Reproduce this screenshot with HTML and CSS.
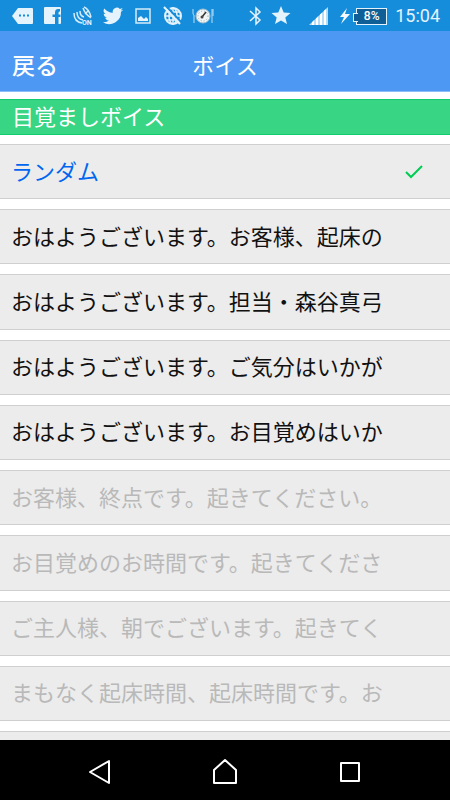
FILE: index.html
```html
<!DOCTYPE html>
<html lang="ja">
<head>
    <meta charset="UTF-8">
    <meta name="viewport" content="width=device-width, initial-scale=1.0">
    <title>ボイス</title>
    <link rel="stylesheet" href="styles.css">
</head>
<body>
    <!-- Status bar -->
    <div class="status-bar">
        <div class="status-left">
            <svg width="22" height="22" viewBox="0 0 22 22"><path d="M6 3h14q1 0 1 1v14q0 1-1 1H6L0 11z" fill="#e4f3fc"/><path d="M7 9.500h2v2H7zM11 9.500h2v2h-2zM15 9.500h2v2h-2z" fill="#168ddb"/></svg>
            <svg width="22" height="22" viewBox="0 0 22 22"><path d="M3 2h15q1 0 1 1v15q0 1-1 1h-1.500v-7h2v-2.500h-2V8q0-1.500 1-1.500H18V4h-2Q13 4 13 7.500v2h-2.500V12H13v7H3q-1 0-1-1V3q0-1 1-1z" fill="#e4f3fc"/></svg>
            <svg width="22" height="22" viewBox="0 0 22 22" fill="none" stroke="#d5ecfa" stroke-width="1.500"><path d="M2 8q0 9 8 10M5 7q0 7 6 8M8 6q0 5 4 6"/><path d="M11 3q2 6 8 10M12 2q5 2 7 10M13 9l3-3"/><text x="10" y="20" class="icon-text">ON</text></svg>
            <svg width="22" height="22" viewBox="0 0 24 24"><path d="M23 5.100a9 9 0 0 1-2.600.7 4.500 4.500 0 0 0 2-2.500 9 9 0 0 1-2.900 1.100 4.500 4.500 0 0 0-7.700 4.100A12.800 12.800 0 0 1 2.500 3.800a4.500 4.500 0 0 0 1.400 6 4.500 4.500 0 0 1-2-.6 4.500 4.500 0 0 0 3.600 4.500 4.500 4.500 0 0 1-2 .1 4.500 4.500 0 0 0 4.200 3.100A9 9 0 0 1 1 18.800 12.800 12.800 0 0 0 20.700 7.400 9 9 0 0 0 23 5.100z" fill="#e4f3fc"/></svg>
            <svg width="22" height="22" viewBox="0 0 22 22"><path d="M4 4h14v14H4z" fill="none" stroke="#d5ecfa" stroke-width="1.500"/><path d="M6 16v-3l3-2 3 3 2-2 2 2v2z" fill="#e4f3fc"/></svg>
            <svg width="22" height="22" viewBox="0 0 22 22" fill="none" stroke="#e4f3fc" stroke-width="2"><circle cx="11" cy="11" r="8"/><ellipse cx="11" cy="11" rx="4" ry="8" stroke-width="1.500"/><path d="M11 3v16M3 11h16M5 7h12M5 15h12" stroke-width="1.500"/><path d="M4 1l16 17" stroke="#168ddb"/><path d="M2 2l16 17"/></svg>
            <svg width="22" height="22" viewBox="0 0 22 22"><path d="M1 4v4q0 2 1 2v8M20 4v14M21 4v7" fill="none" stroke="#b9dff6"/><circle cx="11" cy="11" r="7" fill="#f2f5f6" stroke="#9fbccc"/><circle cx="11" cy="11" r="5" fill="none" stroke="#9aa5aa" stroke-dasharray="1 2"/><path d="M10 12l4-5" stroke="#333" stroke-width="1.500"/><circle cx="10" cy="12" r="1.500" fill="#444"/></svg>
        </div>
        <div class="status-right">
            <svg width="14" height="22" viewBox="0 0 14 22" fill="none" stroke="#e4f3fc" stroke-width="1.500"><path d="M1 6l10 9-4 4V3l4 4-10 9"/></svg>
            <svg width="20" height="22" viewBox="0 0 20 22"><path d="M10 1l2.700 6.500 6.800.5-5.200 4.500 1.700 6.500-6-3.600L4 19l1.700-6.500L.5 8l6.800-.5z" fill="#e4f3fc"/></svg>
            <svg width="32" height="22" viewBox="0 0 32 22"><path d="M10 20L29 2v18z" fill="#b8dcf5"/><path d="M13 17.200v2.800h2v-4.700zM17 13.400V20h2v-8.500zM21 9.600V20h2V7.700zM25 5.800V20h2V3.900z" fill="#fff"/></svg>
            <div class="charge">
                <svg width="11" height="22" viewBox="0 0 11 22"><path d="M8 3L1 12h4l-3 7 9-10H6z" fill="#f3faff"/></svg>
                <span class="battery">8%</span>
            </div>
            <span class="clock">15:04</span>
        </div>
    </div>

    <header class="header">
        <a href="#" class="back">戻る</a>
        <h1>ボイス</h1>
    </header>

    <main class="content">
        <h2>目覚ましボイス</h2>
        <div class="voice-list">
            <button type="button" class="voice selected">
                <span>ランダム</span>
                <svg class="check" width="20" height="16" viewBox="0 0 20 16"><path d="M2 8l5 5L18 2" fill="none" stroke="#0c5" stroke-width="2"/></svg>
            </button>
            <button type="button" class="voice">おはようございます。お客様、起床の</button>
            <button type="button" class="voice">おはようございます。担当・森谷真弓</button>
            <button type="button" class="voice">おはようございます。ご気分はいかが</button>
            <button type="button" class="voice">おはようございます。お目覚めはいか</button>
            <button type="button" class="voice" disabled>お客様、終点です。起きてください。</button>
            <button type="button" class="voice" disabled>お目覚めのお時間です。起きてくださ</button>
            <button type="button" class="voice" disabled>ご主人様、朝でございます。起きてく</button>
            <button type="button" class="voice" disabled>まもなく起床時間、起床時間です。お</button>
            <div class="voice next"></div>
        </div>
    </main>

    <!-- Android navigation -->
    <nav class="nav-bar">
        <button type="button" aria-label="戻る"><svg width="28" height="28" viewBox="0 0 28 28"><path d="M23 3v22L4 14z"/></svg></button>
        <button type="button" aria-label="ホーム"><svg width="28" height="28" viewBox="0 0 28 28"><path d="M3 25V12L14 2l11 10v13z"/></svg></button>
        <button type="button" aria-label="履歴"><svg width="28" height="28" viewBox="0 0 28 28"><path d="M5 5h18v18H5z"/></svg></button>
    </nav>
</body>
</html>
```

FILE: styles.css
```css
* {
    box-sizing: border-box;
}

body {
    margin: 0;
    height: 100vh;
    display: flex;
    flex-direction: column;
    overflow: hidden;
    background: #fff;
    font-family: "Noto Sans CJK JP", sans-serif;
    font-size: 22px;
    line-height: 30px;
}

svg {
    display: block;
    flex: none;
}

button {
    font: inherit;
    border: none;
    padding: 0;
}

/* Status bar */
.status-bar {
    display: flex;
    justify-content: space-between;
    align-items: center;
    height: 31px;
    padding: 1px 10px 0 12px;
    background: #168ddb;
    color: #e4f3fc;
    font-family: Roboto, sans-serif;
}

.status-left,
.status-right,
.charge {
    display: flex;
    align-items: center;
    gap: 8px;
}

.icon-text {
    font-size: 7px;
    font-weight: bold;
    fill: #e4f3fc;
    stroke: none;
}

.charge {
    gap: 6px;
}

.battery {
    position: relative;
    width: 31px;
    height: 17px;
    border: 1px solid #e4f3fc;
    background: #0f5f96;
    color: #fff;
    font-size: 12px;
    font-weight: 500;
    line-height: 15px;
    text-align: center;
}

.battery::before {
    content: "";
    position: absolute;
    left: -4px;
    top: 4px;
    width: 4px;
    height: 7px;
    border: 1px solid #e4f3fc;
    border-right: none;
    background: #0f5f96;
}

.clock {
    font-size: 18px;
}

/* Header */
.header {
    display: grid;
    grid-template-columns: 1fr auto 1fr;
    align-items: center;
    height: 61px;
    padding: 6px 12px 0;
    background: #4d98f2;
    border-bottom: 1px solid #8dbdf7;
    color: #fff;
}

.back {
    color: #fff;
    font-size: 23px;
    font-weight: 500;
    text-decoration: none;
}

h1,
h2 {
    margin: 0;
    font-size: 22px;
    font-weight: 400;
}

/* Voice list */
.content {
    flex: 1;
    min-height: 0;
    display: flex;
    flex-direction: column;
    padding-top: 7px;
}

h2 {
    height: 36px;
    padding: 0 12px;
    background: #38d584;
    border: solid #12cb6c;
    border-width: 1px 0;
    color: #fff;
}

.voice-list {
    flex: 1;
    display: grid;
    grid-template-rows: repeat(9, minmax(0, 1fr)) 9px;
    gap: 10px;
    margin-top: 9px;
}

.voice {
    display: flex;
    align-items: center;
    justify-content: space-between;
    padding: 0 26px 4px 11px;
    background: #ececec;
    border: solid #cfcfcf;
    border-width: 1px 0;
    color: #111;
    white-space: nowrap;
}

.voice:disabled {
    color: #b9b9b9;
}

.selected {
    color: #0066f0;
}

.check {
    margin-top: 4px;
}

.next {
    border-bottom: none;
}

/* Bottom navigation */
.nav-bar {
    display: flex;
    justify-content: center;
    gap: 77px;
    height: 60px;
    padding-top: 4px;
    background: #000;
}

.nav-bar button {
    display: flex;
    align-items: center;
    justify-content: center;
    width: 48px;
    background: none;
}

.nav-bar path {
    fill: none;
    stroke: #fff;
    stroke-width: 2;
    stroke-linejoin: round;
}
```
